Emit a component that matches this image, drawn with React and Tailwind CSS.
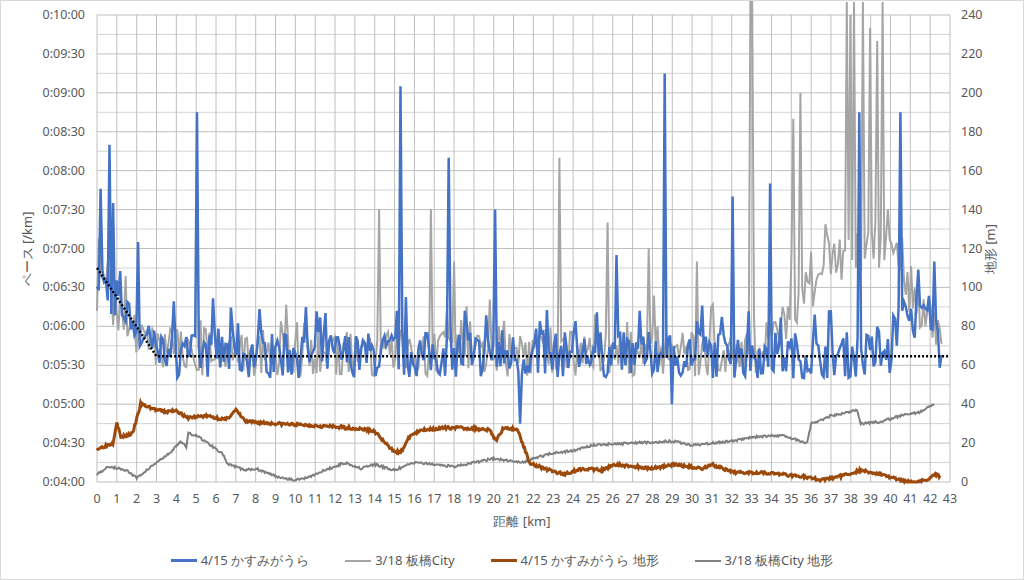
import React from 'react';

const X0 = 96, X1 = 949, Y0 = 14, Y1 = 481;
const kx = (km) => X0 + (km * (X1 - X0)) / 43;
const py = (s) => Y1 - ((s - 240) * (Y1 - Y0)) / 360;
const ey = (m) => Y1 - (m * (Y1 - Y0)) / 240;

function rng(seed) {
  let s = seed;
  return () => {
    s = (s * 16807) % 2147483647;
    return (s - 1) / 2147483646;
  };
}

function interp(pts, x) {
  for (let i = 1; i < pts.length; i++) {
    if (x <= pts[i][0]) {
      const [a, va] = pts[i - 1];
      const [b, vb] = pts[i];
      return va + ((vb - va) * (x - a)) / (b - a);
    }
  }
  return pts[pts.length - 1][1];
}

function paceSeries(seed, base, spikes, end) {
  const r = rng(seed);
  const out = [];
  for (let km = 0; km <= end; km += 0.09) {
    let v = interp(base, km) + (r() - 0.5) * 36 + (r() > 0.85 ? r() * 30 : 0);
    for (const [sk, sv] of spikes) {
      if (Math.abs(km - sk) < 0.045) v = sv;
    }
    out.push([km, Math.min(v, 610)]);
  }
  return out;
}

function elevSeries(seed, pts, end, amp) {
  const r = rng(seed);
  const out = [];
  for (let km = 0; km <= end; km += 0.05) out.push([km, Math.max(0, interp(pts, km) + (r() - 0.5) * amp)]);
  return out;
}

const toPath = (arr, fy) => arr.map(([k, v], i) => `${i ? 'L' : 'M'}${kx(k).toFixed(1)},${fy(v).toFixed(1)}`).join('');

const blue = paceSeries(7, [[0, 400], [1, 380], [2.5, 350], [3, 338], [40, 338], [40.2, 360], [42, 370], [42.6, 340]], [
  [0.2, 466], [0.63, 500], [0.85, 455], [2.1, 425], [5.04, 525], [15.3, 545], [17.7, 490], [20.1, 450], [21.3, 285],
  [26.2, 415], [28.6, 555], [32.0, 460], [33.9, 470], [38.4, 525], [40.5, 525], [42.2, 410], [29.0, 300]], 42.6);

const gray = paceSeries(13, [[0, 390], [2.8, 340], [33, 338], [36, 390], [37, 410], [40, 420], [41, 380], [42.6, 360]], [
  [14.2, 450], [16.8, 450], [18.0, 410], [23.3, 490], [25.7, 440], [27.8, 420], [30.2, 410], [32.9, 610], [33.05, 610],
  [35.1, 520], [35.5, 540], [37.8, 610], [38.0, 600], [38.2, 610], [38.6, 610], [39.0, 590], [39.3, 580], [39.6, 610], [39.9, 450]], 42.6);

const brown = elevSeries(3, [[0, 17], [0.8, 20], [1.0, 31], [1.2, 23], [1.8, 25], [2.2, 40], [3, 37], [3.5, 36], [4.0, 37], [4.5, 33], [5.5, 34],
  [6.5, 32], [7.0, 37], [7.5, 31], [9, 30], [11, 29], [12.5, 28], [13.5, 27], [14, 26], [14.8, 17], [15.3, 15], [15.8, 24], [16.5, 27], [18, 28],
  [19.8, 27], [20.1, 21], [20.5, 28], [21.2, 27], [21.8, 10], [22.5, 7], [23.5, 4], [24.5, 7], [25.5, 6], [26, 9], [28, 7], [29, 9], [30.5, 7],
  [31, 9], [32, 5], [33.5, 5], [35.5, 3], [36.5, 1], [37.5, 3], [38.5, 6], [39.5, 4], [40.5, 1], [41.3, 0], [41.8, 1], [42.2, 4], [42.5, 3]], 42.5, 1.5);

const grayE = elevSeries(5, [[0, 4], [0.6, 8], [1.5, 6], [2, 2], [2.5, 6], [3, 10], [3.7, 15], [4.2, 21], [4.5, 18], [4.6, 25], [5, 24], [6.3, 15],
  [6.6, 9], [7.5, 6], [8, 7], [9, 3], [10, 1], [10.5, 2], [12.5, 10], [13.3, 7], [14, 9], [15, 6], [16, 10], [18, 8], [20, 12], [21.5, 10], [22, 12],
  [23, 15], [24, 16], [25, 19], [27, 20], [29, 21], [30, 19], [32, 21], [33, 23], [34.5, 24], [35.8, 20], [36, 30], [37, 34], [38.3, 37],
  [38.5, 30], [39.5, 31], [40.5, 34], [41.5, 36], [42.2, 40]], 42.2, 1.2);

const leftLabels = ['0:04:00', '0:04:30', '0:05:00', '0:05:30', '0:06:00', '0:06:30', '0:07:00', '0:07:30', '0:08:00', '0:08:30', '0:09:00', '0:09:30', '0:10:00'];

function Legend({ swatch, label }) {
  return (
    <div className="flex items-center gap-1">
      <span className={`inline-block w-[26px] ${swatch}`} />
      <span>{label}</span>
    </div>
  );
}

export default function App() {
  const t = 'fill-[#595959] text-[12.5px]';
  return (
    <div className="w-[1024px] h-[580px] bg-white border border-[#d9d9d9] flex flex-col text-[#595959] text-[13px] overflow-hidden font-['Liberation_Sans','Noto_Sans_CJK_JP',sans-serif]">
      <svg width="1024" height="536" className="block">
        {Array.from({ length: 25 }, (_, i) => (
          <line key={'h' + i} x1={X0} x2={X1} y1={Y1 - (i * (Y1 - Y0)) / 24} y2={Y1 - (i * (Y1 - Y0)) / 24} stroke={i % 2 ? '#d4d4d4' : '#bfbfbf'} strokeWidth="1" />
        ))}
        {Array.from({ length: 44 }, (_, i) => (
          <line key={'v' + i} x1={kx(i)} x2={kx(i)} y1={Y0} y2={Y1} stroke="#bfbfbf" strokeWidth="1" />
        ))}
        <path d={toPath(grayE, ey)} fill="none" stroke="#7f7f7f" strokeWidth="2" />
        <path d={toPath(brown, ey)} fill="none" stroke="#9c4a0c" strokeWidth="3" />
        <path d={toPath(gray, py)} fill="none" stroke="#a5a5a5" strokeWidth="2" />
        <path d={toPath(blue, py)} fill="none" stroke="#4472c4" strokeWidth="2.5" />
        <path d={`M${kx(0)},${py(405)}L${kx(3)},${py(337)}L${kx(43)},${py(337)}`} fill="none" stroke="#000" strokeWidth="2.5" strokeDasharray="2 2" />
        {leftLabels.map((l, i) => (
          <text key={l} x="84" y={Y1 - (i * (Y1 - Y0)) / 12 + 4} textAnchor="end" className={t}>{l}</text>
        ))}
        {Array.from({ length: 13 }, (_, i) => (
          <text key={'r' + i} x="960" y={Y1 - (i * (Y1 - Y0)) / 12 + 4} className={t}>{i * 20}</text>
        ))}
        {Array.from({ length: 44 }, (_, i) => (
          <text key={'x' + i} x={kx(i)} y="502" textAnchor="middle" className={t}>{i}</text>
        ))}
        <text x="521" y="525" textAnchor="middle" className="fill-[#595959] text-[13px]">距離 [km]</text>
        <text transform="translate(31,248) rotate(-90)" textAnchor="middle" className="fill-[#595959] text-[13px]">ペース [/km]</text>
        <text transform="translate(994,248) rotate(-90)" textAnchor="middle" className="fill-[#595959] text-[13px]">地形 [m]</text>
      </svg>
      <div className="flex justify-center gap-[36px] mt-[14px] ml-[-20px]">
        <Legend swatch="h-[3px] bg-[#4472c4]" label="4/15 かすみがうら" />
        <Legend swatch="h-[2px] bg-[#a5a5a5]" label="3/18 板橋City" />
        <Legend swatch="h-[3px] bg-[#9c4a0c]" label="4/15 かすみがうら 地形" />
        <Legend swatch="h-[2px] bg-[#7f7f7f]" label="3/18 板橋City 地形" />
      </div>
    </div>
  );
}
